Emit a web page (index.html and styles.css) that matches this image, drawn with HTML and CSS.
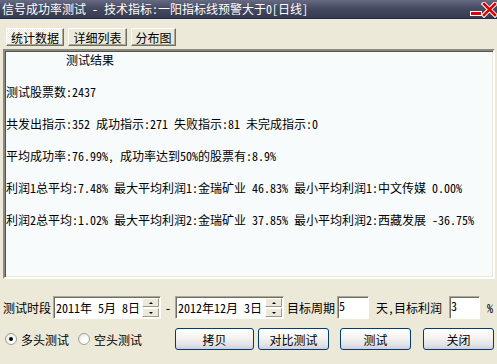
FILE: index.html
```html
<html>
<head>
<title>信号成功率测试</title>
<link rel="stylesheet" href="styles.css">
</head>
<body>

<div class="window">

<div class="titlebar">
<span class="title">信号成功率测试 - 技术指标:一阳指标线预警大于0[日线]</span>
<svg class="ctrls" width="28" height="16" viewBox="0 0 28 16">
<rect x="1.5" y="9.5" width="11" height="4" fill="#e00000" stroke="#fff" stroke-width="1"/>
<path d="M15 2 L26 13 M26 2 L15 13" stroke="#fff" stroke-width="4.5" stroke-linecap="square"/>
<path d="M15 2 L26 13 M26 2 L15 13" stroke="#e00000" stroke-width="2.5" stroke-linecap="square"/>
</svg>
</div>

<div class="tabs">
<button class="tab active w1">统计数据</button>
<button class="tab w2">详细列表</button>
<button class="tab w3">分布图</button>
</div>

<pre class="result">          测试结果

测试股票数:2437

共发出指示:352 成功指示:271 失败指示:81 未完成指示:0

平均成功率:76.99%, 成功率达到50%的股票有:8.9%

利润1总平均:7.48% 最大平均利润1:金瑞矿业 46.83% 最小平均利润1:中文传媒 0.00%

利润2总平均:1.02% 最大平均利润2:金瑞矿业 37.85% 最小平均利润2:西藏发展 -36.75%</pre>

<div class="params">
<span class="lbl l-period">测试时段</span>
<div class="datefield d1">
<span class="dtext">2011年 5月 8日</span>
<div class="spin"><div class="sbtn"><i class="up"></i></div><div class="sbtn"><i class="down"></i></div></div>
</div>
<span class="dash">-</span>
<div class="datefield d2">
<span class="dtext">2012年12月 3日</span>
<div class="spin"><div class="sbtn"><i class="up"></i></div><div class="sbtn"><i class="down"></i></div></div>
</div>
<span class="lbl l-cycle">目标周期</span>
<input class="num n1" value="5">
<span class="lbl l-profit">天,目标利润</span>
<input class="num n2" value="3">
<span class="lbl l-pct">%</span>
</div>

<div class="actions">
<label class="radio r1"><span class="dot checked"></span>多头测试</label>
<label class="radio r2"><span class="dot"></span>空头测试</label>
<button class="btn b1">拷贝</button>
<button class="btn b2">对比测试</button>
<button class="btn b3">测试</button>
<button class="btn b4">关闭</button>
</div>

</div>

</body>
</html>
```

FILE: styles.css
```css
body{
	margin: 0;
	font: 12px "Noto Sans Mono CJK SC", "Noto Sans CJK SC", monospace;
	color: #000;
}
.window{
	width: 497px;
	height: 364px;
	background: #ece9d8;
	overflow: hidden;
}
.titlebar{
	height: 18px;
	border-bottom: 1px solid #1c2a58;
	background: linear-gradient(#666a82, #474b62 45%, #363a4f);
	display: flex;
	align-items: center;
	justify-content: space-between;
	color: #fff;
	padding-left: 2px;
}
.title{
	line-height: 18px;
	white-space: nowrap;
}
.ctrls{
	display: block;
	margin-top: 1px;
}
.tabs{
	display: flex;
	gap: 4px;
	margin: 9px 0 3px 6px;
}
.tab{
	height: 18px;
	padding: 0;
	font: inherit;
	color: #000;
	background: #ece9d8;
	border: 1px solid;
	border-color: #fff #716f64 #716f64 #fff;
	box-shadow: inset -1px -1px 0 #aca899;
}
.tab.active{
	background: repeating-conic-gradient(#fff 0 25%, #ece9d8 0 50%) 0 0/2px 2px;
}
.w1{ width: 58px; }
.w2{ width: 59px; }
.w3{ width: 45px; }
.result{
	margin: 0 0 0 3px;
	width: 492px;
	height: 230px;
	box-sizing: border-box;
	border: 2px solid;
	border-color: #8c8a7e #fff #fff #8c8a7e;
	box-shadow: inset 1px 1px 0 #55534a, inset -1px -1px 0 #ece9d8;
	background: #f7fbfc;
	padding: 1px 0 0 1px;
	font: inherit;
	line-height: 16px;
	white-space: pre;
	overflow: hidden;
}
.params{
	display: flex;
	align-items: center;
	height: 23px;
	margin-top: 17px;
}
.lbl{
	white-space: nowrap;
}
.l-period{ margin-left: 3px; }
.l-cycle{ margin-left: 3px; }
.l-profit{ margin-left: 7px; }
.l-pct{ margin-left: 7px; }
.datefield{
	height: 23px;
	box-sizing: border-box;
	display: flex;
	align-items: center;
	background: #fff;
	border: 1px solid;
	border-color: #aca899 #fff #fff #aca899;
	box-shadow: inset 1px 1px 0 #716f64;
	padding: 1px 1px 1px 2px;
	overflow: hidden;
}
.d1{ width: 108px; margin-left: 2px; }
.d2{ width: 109px; }
.dtext{
	flex: 1;
	overflow: hidden;
	white-space: nowrap;
}
.spin{
	width: 17px;
	height: 19px;
	display: flex;
	flex-direction: column;
	gap: 1px;
}
.sbtn{
	flex: 1;
	box-sizing: border-box;
	border: 1px solid;
	border-color: #fff #9c9a8e #9c9a8e #fff;
	background: #ece9d8;
	display: flex;
	align-items: center;
	justify-content: center;
}
.up{
	border: 2px solid transparent;
	border-bottom: 2px solid #000;
	border-top-width: 0;
}
.down{
	border: 2px solid transparent;
	border-top: 2px solid #000;
	border-bottom-width: 0;
}
.dash{
	width: 14px;
	text-align: center;
}
.num{
	height: 23px;
	box-sizing: border-box;
	font: inherit;
	padding: 0 0 4px 1px;
	border: 1px solid;
	border-color: #aca899 #fff #fff #aca899;
	box-shadow: inset 1px 1px 0 #716f64;
	background: #fff;
	outline: none;
}
.n1{ width: 32px; margin-left: 2px; }
.n2{ width: 31px; margin-left: 7px; }
.actions{
	display: flex;
	align-items: center;
	height: 22px;
	margin-top: 9px;
}
.radio{
	display: flex;
	align-items: center;
	gap: 4px;
	white-space: nowrap;
}
.r1{ margin-left: 5px; }
.r2{ margin-left: 9px; }
.dot{
	width: 12px;
	height: 12px;
	box-sizing: border-box;
	border-radius: 50%;
	border: 1px solid #a0a09a;
	background: radial-gradient(circle at 65% 65%, #fff 30%, #dcdcd4);
	display: flex;
	align-items: center;
	justify-content: center;
}
.dot.checked::after{
	content: "";
	width: 4px;
	height: 4px;
	border-radius: 50%;
	background: #000;
}
.btn{
	height: 22px;
	padding: 0;
	font: inherit;
	color: #000;
	border: 1px solid #003c74;
	border-radius: 3px;
	background: linear-gradient(#fff, #f4f3ef 45%, #e2e1e6 80%, #cfcfda);
}
.b1{ width: 79px; margin-left: 33px; }
.b2{ width: 71px; margin-left: 4px; }
.b3{ width: 71px; margin-left: 11px; }
.b4{ width: 71px; margin-left: 12px; }
```
